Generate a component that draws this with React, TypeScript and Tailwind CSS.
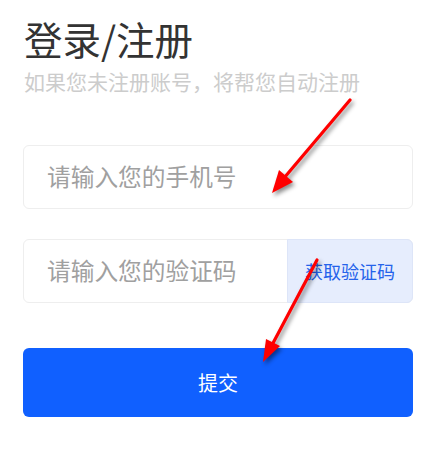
import React from "react";

const font = { fontFamily: '"Noto Sans CJK SC", "Noto Sans", sans-serif' };

function Arrows() {
  return (
    <svg
      className="absolute left-0 top-0 pointer-events-none drop-shadow-[2px_3px_2px_rgba(0,0,0,0.45)]"
      width={427}
      height={452}
      viewBox="0 0 427 452"
    >
      <line x1={350} y1={100} x2={284} y2={178} stroke="#ff0000" strokeWidth={3.2} strokeLinecap="round" />
      <polygon points="272,193 293,182 279,170" fill="#ff0000" />
      <line x1={317} y1={260} x2={272} y2={345} stroke="#ff0000" strokeWidth={3.2} strokeLinecap="round" />
      <polygon points="263,362 280,346 266,339" fill="#ff0000" />
    </svg>
  );
}

export default function App() {
  return (
    <div className="relative w-[427px] h-[452px] bg-white overflow-hidden" style={font}>
      <div className="flex flex-col pl-[23px] pr-[14px] pt-[12px]">
        <h1 className="text-[38.5px] leading-[52px] text-[#333333] pl-[1px]">登录/注册</h1>
        <p className="text-[21px] leading-[30px] text-[#cccccc] pl-[1px] mt-[2px]">如果您未注册账号，将帮您自动注册</p>

        <div className="mt-[49px] h-[64px] rounded-[6px] border border-[#eeeeee] flex items-center pl-[23px]">
          <span className="text-[23.7px] text-[#a0a0a0]">请输入您的手机号</span>
        </div>

        <div className="mt-[30px] h-[64px] rounded-[6px] border border-[#eeeeee] flex items-stretch">
          <div className="flex-1 flex items-center pl-[23px]">
            <span className="text-[23.7px] text-[#a0a0a0]">请输入您的验证码</span>
          </div>
          <div className="w-[126px] -my-px -mr-px flex items-center justify-center bg-[#e6edfd] border border-[#dde5f8] rounded-r-[6px]">
            <span className="text-[18px] text-[#2563eb]">获取验证码</span>
          </div>
        </div>

        <button className="mt-[45px] h-[69px] rounded-[6px] bg-[#1060ff] text-white text-[20px] flex items-center justify-center">
          提交
        </button>
      </div>
      <Arrows />
    </div>
  );
}
